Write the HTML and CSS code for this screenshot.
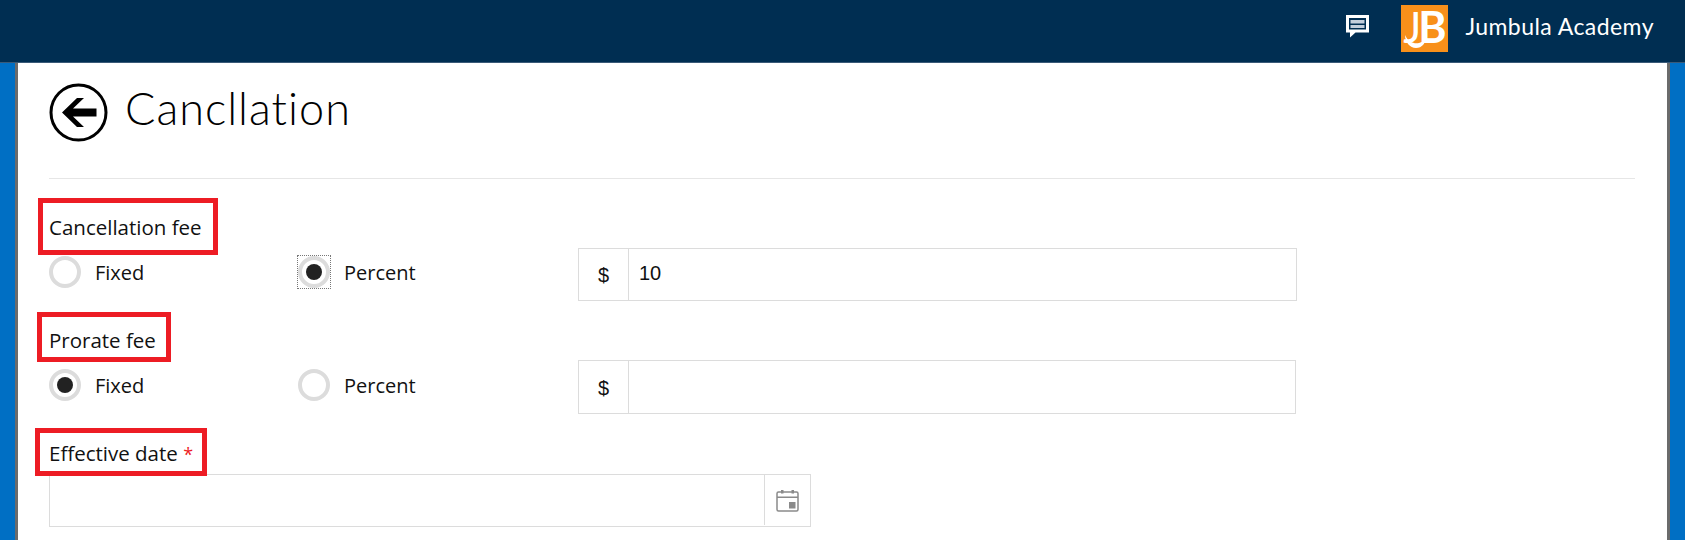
FILE: index.html
```html
<!DOCTYPE html>
<html lang="en">
<head>
  <meta charset="UTF-8">
  <meta name="viewport" content="width=device-width, initial-scale=1.0">
  <title>Jumbula Academy - Cancellation</title>
  <link rel="stylesheet" href="styles.css">
</head>
<body>
  <header class="top-bar">
    <svg class="chat-icon" viewBox="0 0 23 23" width="23" height="23">
      <path fill="#fff" d="M0 0h23v17.500H9.500L4 22.500v-5H0z"/>
      <path fill="#002e52" d="M3 3h17v11.500H3z"/>
      <path fill="#c3cedb" d="M4.500 5h14v3.500h-14zM4.500 10h14v3h-14z"/>
    </svg>
    <div class="logo">
      <span class="logo-j">J</span><span class="logo-b">B</span>
      <svg class="logo-swoosh" viewBox="0 0 47 47" width="47" height="47">
        <path fill="#fff" d="M4 30c3 7 9 9 14 8 4-1 6-3 7-6 0 6-4 11-10 11-6 0-11-6-11-13z"/>
      </svg>
    </div>
    <span class="org-name">Jumbula Academy</span>
  </header>

  <main class="page">
    <section class="card">
      <div class="title-row">
        <svg class="back-icon" viewBox="0 0 59 59" width="59" height="59">
          <circle cx="29.500" cy="29.500" r="27.500" fill="none" stroke="#000" stroke-width="3"/>
          <path fill="#000" d="M13 29.500 28 15h7L24 25.500h23.500v8H24L35 44h-7z"/>
        </svg>
        <h1>Cancllation</h1>
      </div>
      <hr class="divider">

      <div class="field field-cancel">
        <label class="field-label mark-cancel">Cancellation fee</label>
        <div class="option-row">
          <div class="radio-option">
            <span class="radio"></span>
            <span>Fixed</span>
          </div>
          <div class="radio-option">
            <span class="radio checked focused"></span>
            <span>Percent</span>
          </div>
          <div class="input-group">
            <span class="addon">$</span>
            <span class="value">10</span>
          </div>
        </div>
      </div>

      <div class="field field-prorate">
        <label class="field-label mark-prorate">Prorate fee</label>
        <div class="option-row">
          <div class="radio-option">
            <span class="radio checked"></span>
            <span>Fixed</span>
          </div>
          <div class="radio-option">
            <span class="radio"></span>
            <span>Percent</span>
          </div>
          <div class="input-group short">
            <span class="addon">$</span>
            <span class="value"></span>
          </div>
        </div>
      </div>

      <div class="field field-date">
        <label class="field-label mark-date">Effective date <em>*</em></label>
        <div class="date-input">
          <span class="date-value"></span>
          <span class="date-btn">
            <svg viewBox="0 0 23 23" width="23" height="23">
              <rect x="1" y="3" width="21" height="19" rx="1.500" fill="none" stroke="#8a8a8a" stroke-width="1.500"/>
              <path fill="#8a8a8a" d="M1 7.500h21V9H1zM5 1h2.500v3.500H5zM15.500 1H18v3.500h-2.500zM13 13h6.500v6.500H13z"/>
            </svg>
          </span>
        </div>
      </div>
    </section>
  </main>
</body>
</html>
```

FILE: styles.css
```css
* {
  box-sizing: border-box;
  margin: 0;
  padding: 0;
}

body {
  height: 540px;
  overflow: hidden;
  background: #006fc4;
  font-family: 'Open Sans', 'Noto Sans', sans-serif;
  font-size: 20px;
  color: #111;
}

.top-bar {
  height: 63px;
  background: #002e52;
  border-bottom: 1px solid #3a5a78;
  display: flex;
  align-items: flex-start;
  justify-content: flex-end;
  padding: 5px 31px 0 0;
}

.chat-icon {
  margin-top: 10px;
  margin-right: 32px;
}

.logo {
  width: 47px;
  height: 47px;
  background: #f8901a;
  color: #fff;
  font-family: 'Lato', sans-serif;
  font-size: 43px;
  line-height: 47px;
  position: relative;
  display: flex;
  justify-content: center;
}

.logo-swoosh {
  position: absolute;
  left: 0;
  top: 0;
}

.logo-j {
  font-weight: 400;
  margin-top: -2px;
  margin-right: -3px;
}

.logo-b {
  font-weight: 700;
  margin-top: -2px;
}

.org-name {
  margin-left: 17px;
  font-family: 'Lato', sans-serif;
  font-weight: 400;
  font-size: 23px;
  letter-spacing: .44px;
  line-height: 42px;
  color: #fff;
}

.page {
  height: 477px;
  padding: 0 15px;
}

.card {
  height: 100%;
  background: #fff;
  border-left: 3px solid #6b6b6b;
  border-right: 3px solid #6b6b6b;
  padding: 20px 32px 0 31px;
}

.title-row {
  display: flex;
  align-items: flex-start;
  gap: 17px;
}

h1 {
  font-family: 'Lato', sans-serif;
  font-weight: 300;
  font-size: 45px;
  letter-spacing: 1px;
  line-height: 51px;
  color: #000;
}

.divider {
  border: none;
  height: 1px;
  background: #e6e6e6;
  margin-top: 36px;
}

.field-label {
  display: block;
  width: fit-content;
  line-height: 28px;
  position: relative;
  font-size: 20.500px;
}

.field-label em {
  font-style: normal;
  font-size: 18px;
  color: #ed1c24;
}

/* red review marks sit over the labels */
.field-label::after {
  content: '';
  position: absolute;
  border: 5px solid #ed1c24;
}

.mark-cancel::after { inset: -15px -16px -14px -11px; }
.mark-prorate::after { inset: -14px -15px -8px -12px; }
.mark-date::after { inset: -11px -14px -8px -14px; }

.field-cancel { margin-top: 34px; }
.field-prorate { margin-top: 25px; }
.field-date { margin-top: 25px; }

.option-row {
  display: flex;
  align-items: flex-start;
  margin-top: 15px;
}

.radio-option {
  width: 249px;
  height: 32px;
  display: flex;
  align-items: center;
  gap: 14px;
  font-size: 20px;
}

.radio-option + .radio-option {
  width: 280px;
}

.radio {
  width: 32px;
  height: 32px;
  border: 4px solid #dcdcdc;
  border-radius: 50%;
  position: relative;
  flex: none;
}

.radio.checked::before {
  content: '';
  position: absolute;
  inset: 4px;
  background: #222;
  border-radius: 50%;
}

.radio.focused::after {
  content: '';
  position: absolute;
  inset: -5px;
  border: 1px dotted #777;
}

.input-group {
  width: 719px;
  height: 53px;
  margin-top: -8px;
  border: 1px solid #dcdcdc;
  display: flex;
  font-family: 'Liberation Sans', sans-serif;
  font-size: 20px;
}

.input-group.short {
  width: 718px;
  height: 54px;
  margin-top: -9px;
}

.addon {
  width: 50px;
  border-right: 1px solid #dcdcdc;
  display: flex;
  align-items: center;
  justify-content: center;
  padding-top: 2px;
}

.value {
  flex: 1;
  padding-left: 10px;
  line-height: 49px;
}

.date-input {
  width: 762px;
  height: 53px;
  margin-top: 6px;
  border: 1px solid #dcdcdc;
  display: flex;
}

.date-value {
  flex: 1;
}

.date-btn {
  width: 46px;
  height: 50px;
  border-left: 1px solid #dcdcdc;
  display: flex;
  align-items: center;
  justify-content: center;
}
```
